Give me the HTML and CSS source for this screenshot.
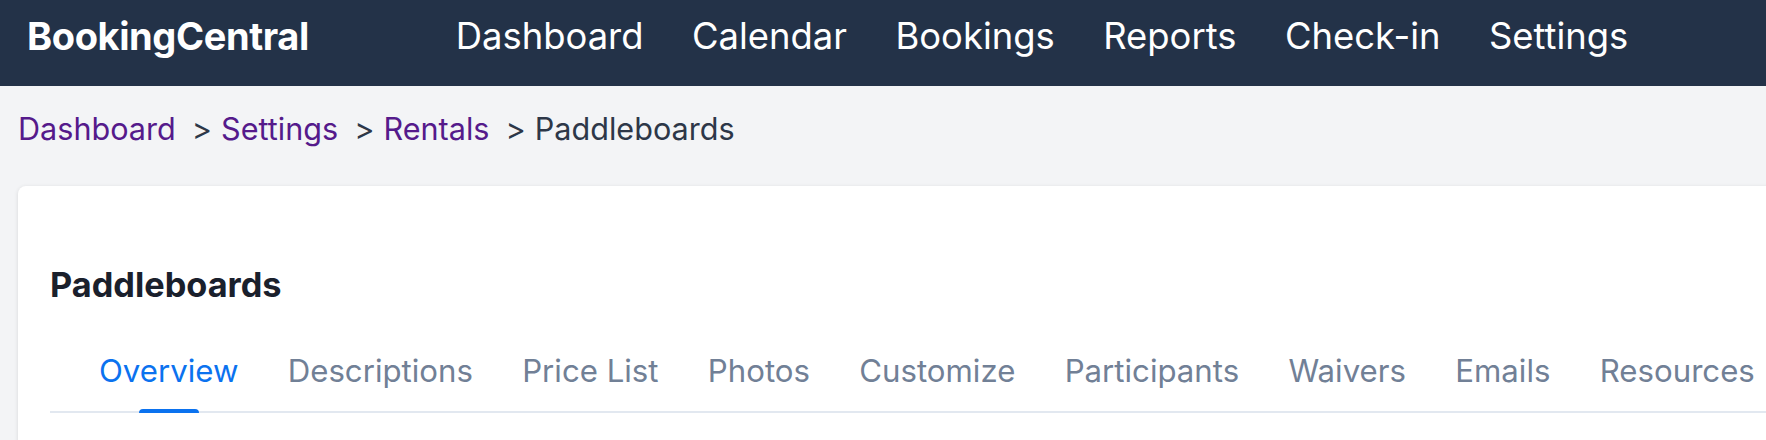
FILE: index.html
```html
<!DOCTYPE html>
<html lang="en">
<head>
    <meta charset="UTF-8">
    <meta name="viewport" content="width=device-width, initial-scale=1.0">
    <title>Paddleboards - BookingCentral</title>
    <link rel="stylesheet" href="styles.css">
</head>
<body>
    <header class="topbar">
        <a class="brand" href="#">BookingCentral</a>
        <nav class="mainnav">
            <a href="#">Dashboard</a>
            <a href="#">Calendar</a>
            <a href="#">Bookings</a>
            <a href="#">Reports</a>
            <a href="#">Check-in</a>
            <a href="#">Settings</a>
        </nav>
    </header>

    <main class="page">
        <div class="crumbs">
            <a href="#">Dashboard</a>
            <span class="sep">&gt;</span>
            <a href="#">Settings</a>
            <span class="sep">&gt;</span>
            <a href="#">Rentals</a>
            <span class="sep">&gt;</span>
            <span class="current">Paddleboards</span>
        </div>

        <section class="card">
            <h1 class="card-title">Paddleboards</h1>
            <ul class="tabs">
                <li><a class="active" href="#">Overview</a></li>
                <li><a href="#">Descriptions</a></li>
                <li><a href="#">Price List</a></li>
                <li><a href="#">Photos</a></li>
                <li><a href="#">Customize</a></li>
                <li><a href="#">Participants</a></li>
                <li><a href="#">Waivers</a></li>
                <li><a href="#">Emails</a></li>
                <li><a href="#">Resources</a></li>
            </ul>
        </section>
    </main>
</body>
</html>
```

FILE: styles.css
```css
body {
    margin: 0;
    font-family: Inter, "Noto Sans", sans-serif;
    background-color: #f3f4f6;
    overflow: hidden;
}
a {
    text-decoration: none;
}

/* barra superior */
.topbar {
    height: 86px;
    padding: 0 0 14px 27px;
    box-sizing: border-box;
    display: flex;
    align-items: center;
    background: #233248;
}
.brand {
    color: #fff;
    font-size: 38px;
    font-weight: 700;
    letter-spacing: -0.4px;
}
.mainnav {
    display: flex;
    gap: 48.5px;
    margin-left: 147px;
}
.mainnav a {
    color: #fff;
    font-size: 36.4px;
    font-weight: 400;
}

.page {
    padding: 0 18px;
}

/* migas */
.crumbs {
    display: flex;
    margin-top: 25px;
    font-size: 30.6px;
    line-height: 36px;
    color: #2d3748;
}
.crumbs a {
    color: #551a8b;
}
.crumbs .sep {
    margin: 0 9px 0 16px;
}

.card {
    width: 1900px;
    height: 300px;
    margin-top: 39px;
    padding: 79px 0 0 32px;
    background: white;
    border-radius: 8px;
    box-shadow: 0 1px 4px rgba(0, 0, 0, 0.12);
}
.card-title {
    margin: 0;
    font-size: 34.3px;
    line-height: 40px;
    font-weight: 700;
    color: #1a202c;
}
.tabs {
    display: flex;
    gap: 49.3px;
    list-style: none;
    margin: 46px 0 0;
    padding: 0 0 0 49px;
    border-bottom: 2px solid #e2e8f0;
}
.tabs a {
    position: relative;
    display: block;
    padding-bottom: 20px;
    font-size: 31.2px;
    line-height: 40px;
    color: #718096;
}
.tabs a.active {
    color: #0b72ef;
}
.tabs a.active::after {
    content: "";
    position: absolute;
    left: 50%;
    bottom: -2px;
    width: 60px;
    height: 4px;
    margin-left: -30px;
    background: #0b72ef;
    border-radius: 4px 4px 0 0;
}
```
